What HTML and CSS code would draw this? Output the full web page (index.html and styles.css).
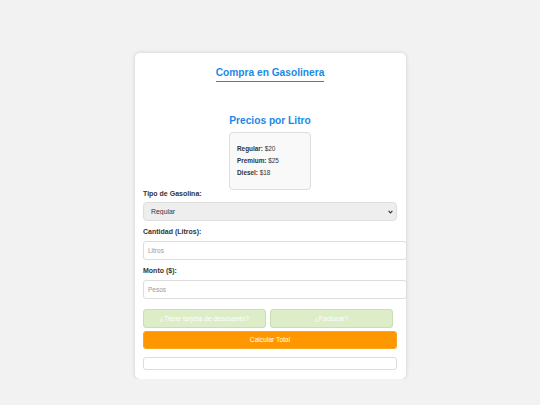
FILE: index.html
```html
<!DOCTYPE html>
<html lang="es">
<head>
<meta charset="utf-8">
<title>Compra en Gasolinera</title>
<link rel="stylesheet" href="styles.css">
</head>
<body>
<div class="card">
  <div class="header">
    <h1 class="title">Compra en Gasolinera</h1>
  </div>
  <h2 class="subtitle">Precios por Litro</h2>
  <div class="prices">
    <p><b>Regular:</b> $20</p>
    <p><b>Premium:</b> $25</p>
    <p><b>Diesel:</b> $18</p>
  </div>
  <label class="label label-first">Tipo de Gasolina:</label>
  <div class="select-wrap">
    <select class="select">
      <option>Regular</option>
      <option>Premium</option>
      <option>Diesel</option>
    </select>
    <svg class="chevron" width="5" height="4" viewBox="0 0 5 4"><path d="M0.6 0.8 L2.5 2.9 L4.4 0.8" fill="none" stroke="#333" stroke-width="1.1"/></svg>
  </div>
  <label class="label">Cantidad (Litros):</label>
  <input class="input" type="text" placeholder="Litros">
  <label class="label">Monto ($):</label>
  <input class="input" type="text" placeholder="Pesos">
  <div class="toggles">
    <button class="toggle">¿Tiene tarjeta de descuento?</button>
    <button class="toggle">¿Facturar?</button>
  </div>
  <button class="calc">Calcular Total</button>
  <div class="result"></div>
</div>
</body>
</html>
```
FILE: styles.css
```css
* { box-sizing: border-box; }
body {
  margin: 0;
  background: #f2f2f2;
  font-family: "Liberation Sans", Arial, sans-serif;
  color: #333;
}
.card {
  width: 271px;
  margin: 53px auto 0;
  padding: 9px 8.5px 9px 8.5px;
  background: #fff;
  border-radius: 5px;
  box-shadow: 0 0 4px rgba(0,0,0,0.15);
}
.header { text-align: center; }
.title {
  display: inline-block;
  margin: 2.5px 0 0;
  padding-bottom: 1.5px;
  font-size: 10.2px;
  line-height: 12px;
  font-weight: bold;
  color: #1e88e5;
  border-bottom: 1px solid #1e88e5;
}
.subtitle {
  margin: 33px 0 0;
  text-align: center;
  font-size: 10.2px;
  line-height: 12px;
  font-weight: bold;
  color: #1e88e5;
}
.prices {
  width: 82px;
  margin: 5.5px auto 0;
  padding: 9.5px 7px 10px;
  background: #f9f9f9;
  border: 1px solid #ddd;
  border-radius: 4px;
  font-size: 6.4px;
  line-height: 12px;
  color: #333;
}
.prices p { margin: 0; }
.label {
  display: block;
  margin-top: 7px;
  font-size: 7px;
  line-height: 8px;
  font-weight: bold;
  color: #333;
}
.label-first { margin-top: 0; }
.select-wrap {
  position: relative;
  margin-top: 4px;
}
.select {
  display: block;
  width: 100%;
  height: 19px;
  padding: 0 0 0 7px;
  -webkit-appearance: none;
  appearance: none;
  background: #eee;
  border: 1px solid #ddd;
  border-radius: 4px;
  font-family: "Liberation Sans", Arial, sans-serif;
  font-size: 6.9px;
  color: #333;
}
.chevron {
  position: absolute;
  right: 4px;
  top: 8px;
  pointer-events: none;
}
.input {
  display: block;
  box-sizing: content-box;
  width: 100%;
  height: 9px;
  margin-top: 5px;
  padding: 4px 4px;
  background: #fff;
  border: 1px solid #ddd;
  border-radius: 3px;
  font-family: "Liberation Sans", Arial, sans-serif;
  font-size: 6.5px;
  color: #333;
}
.input::placeholder { color: #999; }
.toggles {
  display: flex;
  gap: 4px;
  margin-top: 10px;
}
.toggle {
  width: 123px;
  height: 19px;
  padding: 0;
  background: #dcedc8;
  border: 1px solid #c8dfb0;
  border-radius: 3px;
  color: #fff;
  font-family: "Liberation Sans", Arial, sans-serif;
  font-size: 6.9px;
}
.calc {
  display: block;
  width: 100%;
  height: 18px;
  margin-top: 3px;
  padding: 0;
  background: #ff9800;
  border: 1px solid #f5a623;
  border-radius: 3px;
  color: #fff;
  font-family: "Liberation Sans", Arial, sans-serif;
  font-size: 6.7px;
}
.result {
  height: 13px;
  margin-top: 8px;
  border: 1px solid #ddd;
  border-radius: 3px;
  background: #fff;
}
```
